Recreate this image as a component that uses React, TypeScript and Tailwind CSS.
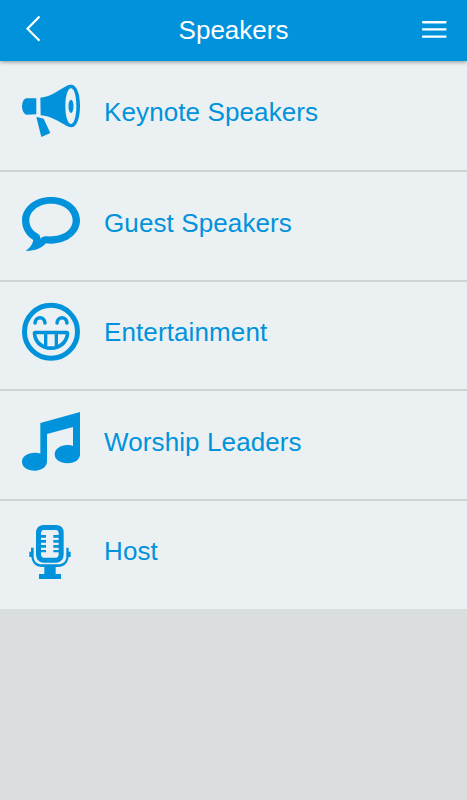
import type { ReactNode } from "react";

function Icon({ children, box = "0 0 240 240" }: { children: ReactNode; box?: string }) {
  return (
    <svg viewBox={box} className="h-20 w-20 shrink-0" fill="currentColor" aria-hidden="true">
      {children}
    </svg>
  );
}

const Megaphone = () => (
  <Icon>
    <path d="M79 70H48C40 74 36 83 36 94S40 115 48 119L79 118Z" />
    <path
      fillRule="evenodd"
      d="M91 68C124 65 149 42 171 32C176 29 184 29 190 31C204 38 210 66 210 93C210 120 204 149 191 155C184 158 175 156 169 152C147 141 122 122 92 121ZM183 40C173 40 166 64 166 93S173 147 183 147S199 122 199 93S193 40 183 40Z"
    />
    <ellipse cx="183" cy="94" rx="7.5" ry="20" />
    <path d="M79 126C87 128 94 129 101 131L121 174L94 186Z" />
  </Icon>
);

const Bubble = () => (
  <Icon box="0 3 240 240">
    <path
      fillRule="evenodd"
      d="M123 36C172 36 210 67 210 106S172 176 123 176C117 176 112 176 108 175C97 188 78 198 47 198C60 189 68 178 70 165C48 153 36 130 36 106C36 67 74 36 123 36ZM123 56C86 56 58 79 58 106C58 124 68 139 85 147C90 150 91 156 91 161C95 157 99 154 108 154C155 158 188 137 188 106C188 78 160 56 123 56Z"
    />
  </Icon>
);

const Grin = () => (
  <Icon>
    <circle cx="123" cy="110" r="79.5" fill="none" stroke="currentColor" strokeWidth="15" />
    <g fill="none" stroke="currentColor" strokeWidth="10.5" strokeLinecap="round">
      <path d="M75 84C77 63 103 63 105 84M141 84C143 63 169 63 171 84" />
    </g>
    <path
      fillRule="evenodd"
      d="M76 107H170Q178 107 178 115C176 146 154 165 123 165S70 146 68 115Q68 107 76 107ZM79 118C81 132 90 143 102 149V118ZM112 118V154H134V118ZM144 118V149C156 143 165 132 167 118Z"
    />
  </Icon>
);

const MusicNotes = () => (
  <Icon>
    <path d="M91 54L210 21V151C208 166 192 175 172 175C151 175 134 164 134 148S151 120 172 120C179 120 185 121 189 123V66L111 87V169C111 185 96 197 74 197S36 186 36 170S53 143 74 143C81 143 87 144 91 146Z" />
  </Icon>
);

const Microphone = () => (
  <Icon box="0 -3 240 240">
    <path
      fillRule="evenodd"
      d="M99 30H140Q161 32 161 53V119Q160 141 139 143H100Q79 141 78 119V53Q79 32 99 30ZM99 45Q94 47 93 53V60H108V68H93V75H108V83H93V90H108V98H93V105H108V112H93V120Q94 125 99 128H140Q145 125 146 120V112H130V105H146V98H130V90H146V83H130V75H146V68H130V60H146V53Q145 47 140 45Z"
    />
    <path d="M63 98H71V123C71 139 80 148 96 148H143C160 148 169 139 169 123V98H176V110H182V126H176C173 145 163 156 144 156H137V177H153V192H87V177H103V156H96C77 156 67 145 64 126H58V110H63Z" />
  </Icon>
);

const rows = [
  { label: "Keynote Speakers", icon: <Megaphone />, size: "h-[111px] pt-[14px] border-b-2" },
  { label: "Guest Speakers", icon: <Bubble />, size: "h-[110px] pt-[14px] border-b-2" },
  { label: "Entertainment", icon: <Grin />, size: "h-[109px] pt-[13px] border-b-2" },
  { label: "Worship Leaders", icon: <MusicNotes />, size: "h-[110px] pt-[14px] border-b-2" },
  { label: "Host", icon: <Microphone />, size: "h-[108px] pt-[13px]" },
];

export default function App() {
  return (
    <div className="flex h-screen flex-col bg-[#dadedf] font-['Liberation_Sans',Arial,sans-serif] text-[26px] leading-[30px]">
      <header className="relative z-10 flex h-[61px] shrink-0 items-center justify-between bg-[#0093dc] pr-[19px] pb-[3px] pl-[24px] text-white shadow-[0_1px_4px_rgba(0,0,0,0.4)]">
        <button aria-label="Back" className="w-[22px] pb-[2px]">
          <svg viewBox="0 0 18 28" className="h-[28px] w-[18px]" fill="none" stroke="currentColor" strokeWidth="2.2">
            <path d="M15.5 2.5L3.5 14.8L15.5 26.8" />
          </svg>
        </button>
        <h1 className="pt-[2px]">Speakers</h1>
        <button aria-label="Menu" className="w-[27px]">
          <svg viewBox="0 0 27 18" className="h-[18px] w-[27px]" fill="currentColor">
            <rect x="1" y="1" width="24.5" height="2.4" rx="0.8" />
            <rect x="1" y="8.2" width="24.5" height="2.4" rx="0.8" />
            <rect x="1" y="15.4" width="24.5" height="2.4" rx="0.8" />
          </svg>
        </button>
      </header>
      <ul>
        {rows.map(({ label, icon, size }) => (
          <li key={label} className={`flex items-start border-[#d0d2d4] bg-[#ebf0f3] pl-[10px] text-[#0093dc] ${size}`}>
            {icon}
            <span className="pt-[22px] pl-[14px] tracking-[0.11px]">{label}</span>
          </li>
        ))}
      </ul>
    </div>
  );
}
